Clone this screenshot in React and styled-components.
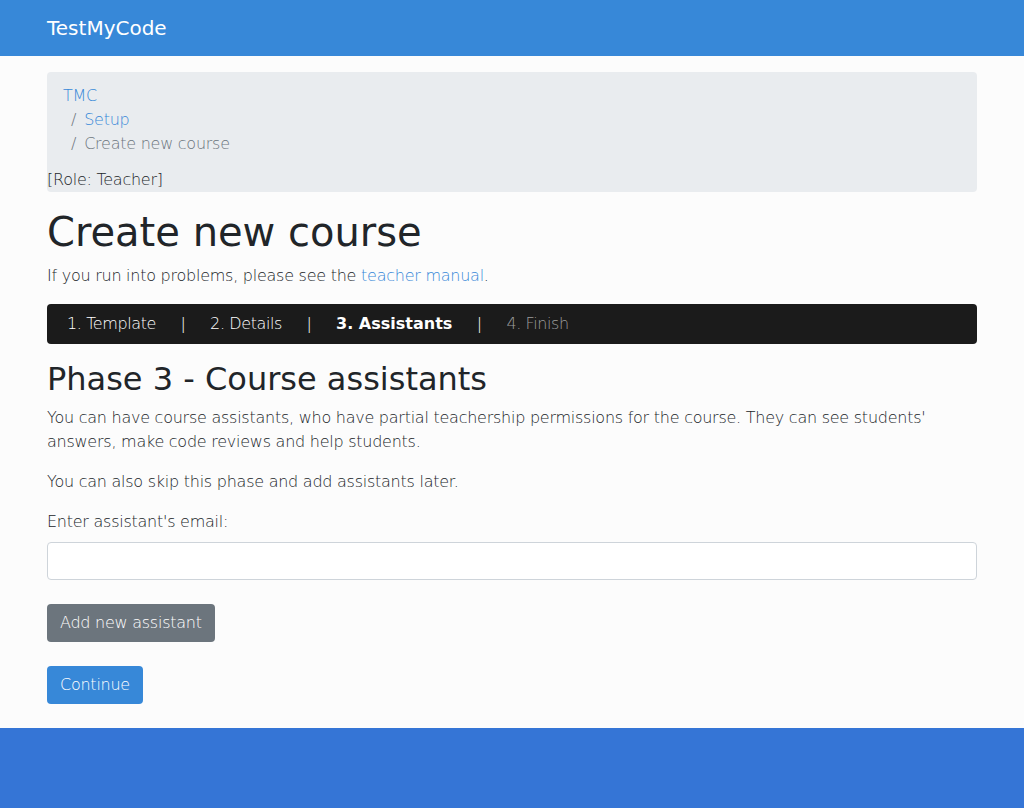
import React from "react";
import styled, { createGlobalStyle } from "styled-components";

const GlobalStyle = createGlobalStyle`
  html, body {
    margin: 0;
    padding: 0;
    background: #fcfcfc;
  }
  body {
    font-family: "DejaVu Sans", sans-serif;
    font-weight: 200;
    font-size: 16px;
    line-height: 1.5;
    letter-spacing: -0.25px;
    color: #212529;
  }
  * {
    box-sizing: border-box;
  }
`;

const Navbar = styled.nav`
  height: 56px;
  background: #3788d8;
  display: flex;
  align-items: center;
`;

const Container = styled.div`
  width: 960px;
  margin: 0 auto;
  padding: 0 15px;
`;

const Brand = styled.a`
  color: #fff;
  font-size: 20px;
  font-weight: 400;
  letter-spacing: 0;
  text-decoration: none;
  line-height: 1.5;
`;

const Main = styled.main`
  padding-top: 16px;
  padding-bottom: 24px;
  background: #fcfcfc;
`;

const BreadcrumbBox = styled.div`
  background: #e9ecef;
  border-radius: 4px;
`;

const Crumbs = styled.ol`
  list-style: none;
  margin: 0;
  padding: 12px 16px;

  & > li + li {
    padding-left: 8px;
  }
  & > li + li::before {
    content: "/";
    color: #6c757d;
    padding-right: 8px;
  }
`;

const Crumb = styled.li`
  color: ${(p) => (p.$active ? "#6c757d" : "inherit")};
`;

const Link = styled.a`
  color: #3788d8;
  text-decoration: none;
`;

const Role = styled.div``;

const Title = styled.h1`
  font-size: 40px;
  font-weight: 400;
  letter-spacing: 0;
  line-height: 1.2;
  margin: 16px 0 8px;
`;

const Paragraph = styled.p`
  margin: 0 0 16px;
`;

const Steps = styled.div`
  background: #1b1b1b;
  border-radius: 4px;
  height: 40px;
  display: flex;
  align-items: center;
  padding: 0 20px;
  color: #fff;
`;

const Step = styled.span`
  font-weight: ${(p) => (p.$current ? 700 : 200)};
  letter-spacing: ${(p) => (p.$current ? "0" : "-0.4px")};
  color: ${(p) => (p.$future ? "#9d9d9d" : "#fff")};
`;

const Divider = styled.span`
  margin: 0 24.5px;
`;

const Subtitle = styled.h2`
  font-size: 32px;
  font-weight: 400;
  letter-spacing: 0;
  line-height: 1.2;
  margin: 16px 0 8px;
`;

const Label = styled.label`
  display: block;
  margin-bottom: 8px;
`;

const Input = styled.input`
  display: block;
  width: 100%;
  height: 38px;
  border: 1px solid #ced4da;
  border-radius: 4px;
  background: #fff;
  margin: 0 0 24px;
  padding: 6px 12px;
  font: inherit;
`;

const Button = styled.button`
  display: block;
  border: none;
  border-radius: 4px;
  height: 38px;
  padding: 0 13px;
  font: inherit;
  letter-spacing: inherit;
  color: #fff;
  background: ${(p) => (p.$variant === "secondary" ? "#6c757d" : "#3788d8")};
  margin-bottom: 24px;
  &:last-child {
    margin-bottom: 0;
  }
`;

const Footer = styled.footer`
  height: 80px;
  background: #3575d6;
`;

export default function App() {
  return (
    <>
      <GlobalStyle />
      <Navbar>
        <Container>
          <Brand href="#">TestMyCode</Brand>
        </Container>
      </Navbar>
      <Main>
        <Container>
          <BreadcrumbBox>
            <Crumbs>
              <Crumb>
                <Link href="#">TMC</Link>
              </Crumb>
              <Crumb>
                <Link href="#">Setup</Link>
              </Crumb>
              <Crumb $active>Create new course</Crumb>
            </Crumbs>
            <Role>[Role: Teacher]</Role>
          </BreadcrumbBox>
          <Title>Create new course</Title>
          <Paragraph>
            If you run into problems, please see the{" "}
            <Link href="#">teacher manual</Link>.
          </Paragraph>
          <Steps>
            <Step>1. Template</Step>
            <Divider>|</Divider>
            <Step>2. Details</Step>
            <Divider>|</Divider>
            <Step $current>3. Assistants</Step>
            <Divider>|</Divider>
            <Step $future>4. Finish</Step>
          </Steps>
          <Subtitle>Phase 3 - Course assistants</Subtitle>
          <Paragraph>
            You can have course assistants, who have partial teachership
            permissions for the course. They can see students' answers, make
            code reviews and help students.
          </Paragraph>
          <Paragraph>
            You can also skip this phase and add assistants later.
          </Paragraph>
          <form onSubmit={(e) => e.preventDefault()}>
            <Label htmlFor="email">Enter assistant's email:</Label>
            <Input id="email" type="text" />
            <Button type="button" $variant="secondary">
              Add new assistant
            </Button>
            <Button type="submit">Continue</Button>
          </form>
        </Container>
      </Main>
      <Footer />
    </>
  );
}
